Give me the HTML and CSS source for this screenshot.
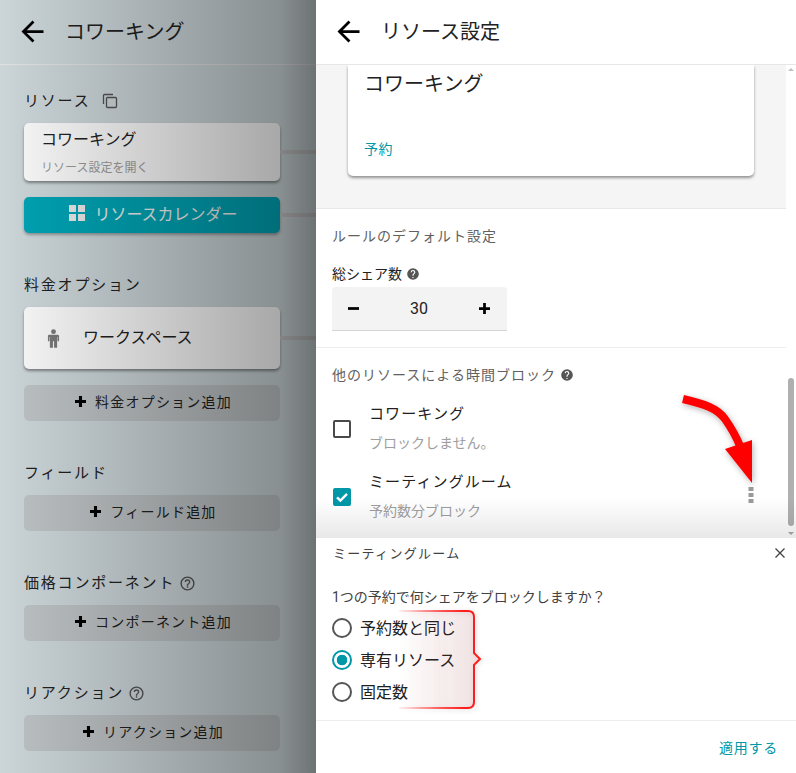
FILE: index.html
```html
<!DOCTYPE html>
<html lang="ja">
<head>
<meta charset="utf-8">
<title>リソース設定</title>
<link rel="stylesheet" href="styles.css">
</head>
<body>
<div class="app">
  <aside class="left">
    <header class="head">
      <svg class="back" viewBox="0 0 24 24"><path d="M20 11H7.830l5.590-5.590L12 4l-8 8 8 8 1.410-1.410L7.830 13H20z"/></svg>
      <h1 class="head-title">コワーキング</h1>
    </header>
    <div class="left-body">
      <section class="sec sec-first">
        <h2 class="sec-label">リソース
          <svg class="copy" viewBox="0 0 16 16"><path d="M1.500 11V2.500a1 1 0 0 1 1-1H11M4.500 5.500a1 1 0 0 1 1-1h8a1 1 0 0 1 1 1v8a1 1 0 0 1-1 1h-8a1 1 0 0 1-1-1z"/></svg>
        </h2>
        <div class="card card-res">
          <div class="card-title">コワーキング</div>
          <div class="card-sub">リソース設定を開く</div>
        </div>
        <button class="btn-teal">
          <svg class="grid" viewBox="0 0 16 16"><path d="M0 0h7v7H0zM9 0h7v7H9zM0 9h7v7H0zM9 9h7v7H9z"/></svg>
          リソースカレンダー
        </button>
      </section>
      <section class="sec">
        <h2 class="sec-label">料金オプション</h2>
        <div class="card card-opt">
          <svg class="person" viewBox="0 0 14 20"><circle cx="7" cy="2.600" r="2.600"/><path d="M2.600 6h8.800A1.600 1.600 0 0 1 13 7.600V13h-1.600V8.500h-.500V20H7.600v-7H6.400v7H3.100V8.500h-.500V13H1V7.600A1.600 1.600 0 0 1 2.600 6z"/></svg>
          <span class="opt-name">ワークスペース</span>
        </div>
        <button class="btn-add"><svg class="plus" viewBox="0 0 12 12"><path d="M4.300 0h3.400v4.300H12v3.400H7.700V12H4.300V7.700H0V4.300h4.300z"/></svg>料金オプション追加</button>
      </section>
      <section class="sec">
        <h2 class="sec-label">フィールド</h2>
        <button class="btn-add"><svg class="plus" viewBox="0 0 12 12"><path d="M4.300 0h3.400v4.300H12v3.400H7.700V12H4.300V7.700H0V4.300h4.300z"/></svg>フィールド追加</button>
      </section>
      <section class="sec">
        <h2 class="sec-label">価格コンポーネント
          <svg class="help-o" viewBox="0 0 24 24"><path d="M11 18h2v-2h-2zm1-16a10 10 0 1 0 0 20 10 10 0 0 0 0-20zm0 18a8 8 0 1 1 0-16 8 8 0 0 1 0 16zm0-14a4 4 0 0 0-4 4h2a2 2 0 1 1 4 0c0 2-3 1.750-3 5h2c0-2.250 3-2.500 3-5a4 4 0 0 0-4-4z"/></svg>
        </h2>
        <button class="btn-add"><svg class="plus" viewBox="0 0 12 12"><path d="M4.300 0h3.400v4.300H12v3.400H7.700V12H4.300V7.700H0V4.300h4.300z"/></svg>コンポーネント追加</button>
      </section>
      <section class="sec">
        <h2 class="sec-label">リアクション
          <svg class="help-o" viewBox="0 0 24 24"><path d="M11 18h2v-2h-2zm1-16a10 10 0 1 0 0 20 10 10 0 0 0 0-20zm0 18a8 8 0 1 1 0-16 8 8 0 0 1 0 16zm0-14a4 4 0 0 0-4 4h2a2 2 0 1 1 4 0c0 2-3 1.750-3 5h2c0-2.250 3-2.500 3-5a4 4 0 0 0-4-4z"/></svg>
        </h2>
        <button class="btn-add"><svg class="plus" viewBox="0 0 12 12"><path d="M4.300 0h3.400v4.300H12v3.400H7.700V12H4.300V7.700H0V4.300h4.300z"/></svg>リアクション追加</button>
      </section>
    </div>
    <i class="link link-1"></i>
    <i class="link link-2"></i>
    <i class="link link-3"></i>
    <div class="dim"></div>
  </aside>

  <main class="right">
    <header class="head">
      <svg class="back" viewBox="0 0 24 24"><path d="M20 11H7.830l5.590-5.590L12 4l-8 8 8 8 1.410-1.410L7.830 13H20z"/></svg>
      <h1 class="head-title">リソース設定</h1>
    </header>
    <div class="scroller">
      <div class="scroll-main">
        <div class="preview">
          <div class="preview-card">
            <div class="preview-title">コワーキング</div>
            <div class="preview-link">予約</div>
          </div>
        </div>
        <div class="rules">
          <div class="muted-head">ルールのデフォルト設定</div>
          <div class="field-label">総シェア数 <svg class="help" viewBox="0 0 24 24"><path d="M12 2a10 10 0 1 0 0 20 10 10 0 0 0 0-20zm1 17h-2v-2h2zm2.070-7.750-.900.920C13.450 12.900 13 13.500 13 15h-2v-.500c0-1.100.450-2.100 1.170-2.830l1.240-1.260A2 2 0 1 0 10 9H8a4 4 0 1 1 8 0c0 .880-.360 1.680-.930 2.250z"/></svg></div>
          <div class="stepper">
            <svg class="step-icon" viewBox="0 0 12 12"><path d="M0 4.500h12v3H0z"/></svg>
            <span class="step-val">30</span>
            <svg class="step-icon" viewBox="0 0 12 12"><path d="M4.500 0h3v4.500H12v3H7.500V12h-3V7.500H0v-3h4.500z"/></svg>
          </div>
        </div>
        <div class="blocks">
          <div class="muted-head">他のリソースによる時間ブロック <svg class="help" viewBox="0 0 24 24"><path d="M12 2a10 10 0 1 0 0 20 10 10 0 0 0 0-20zm1 17h-2v-2h2zm2.070-7.750-.900.920C13.450 12.900 13 13.500 13 15h-2v-.500c0-1.100.450-2.100 1.170-2.830l1.240-1.260A2 2 0 1 0 10 9H8a4 4 0 1 1 8 0c0 .880-.360 1.680-.930 2.250z"/></svg></div>
          <div class="row">
            <span class="check"></span>
            <div class="row-text">
              <div class="row-title">コワーキング</div>
              <div class="row-sub">ブロックしません。</div>
            </div>
          </div>
          <div class="row">
            <span class="check check-on"><svg viewBox="0 0 18 18"><path d="M4 9.300l3.400 3.300L14 5.800"/></svg></span>
            <div class="row-text">
              <div class="row-title">ミーティングルーム</div>
              <div class="row-sub">予約数分ブロック</div>
            </div>
            <svg class="dots" viewBox="0 0 6 16"><path d="M.500 0h5v4h-5zM.500 6h5v4h-5zM.500 12h5v4h-5z"/></svg>
          </div>
        </div>
      </div>
      <div class="scrollbar">
        <i class="sb-up"></i>
        <i class="sb-thumb"></i>
        <i class="sb-down"></i>
      </div>
      <div class="sheet-shadow"></div>
      <svg class="arrow" viewBox="0 0 100 130">
        <defs><filter id="as" x="-30%" y="-30%" width="170%" height="170%"><feDropShadow dx="1" dy="2" stdDeviation="3" flood-color="#000" flood-opacity=".3"/></filter></defs>
        <g filter="url(#as)">
          <path class="arrow-line" d="M24 15C45 20 58 24 66 35C73 45 77 52 81 62"/>
          <path class="arrow-head" d="M66 65L93 56L93 99Z"/>
        </g>
      </svg>
    </div>
    <section class="sheet">
      <div class="sheet-head">
        <span class="sheet-title">ミーティングルーム</span>
        <svg class="close" viewBox="0 0 12 12"><path d="M1.500 1.500l9 9M10.500 1.500l-9 9"/></svg>
      </div>
      <div class="question">1つの予約で何シェアをブロックしますか？</div>
      <div class="radios">
        <label class="radio-row"><span class="radio"></span><span class="radio-text">予約数と同じ</span></label>
        <label class="radio-row"><span class="radio radio-on"></span><span class="radio-text">専有リソース</span></label>
        <label class="radio-row"><span class="radio"></span><span class="radio-text">固定数</span></label>
      </div>
      <svg class="bracket" viewBox="0 0 92 110">
        <defs>
          <linearGradient id="bf" x1="0" x2="1" y1="0" y2="0"><stop offset="0" stop-color="#a03030" stop-opacity="0"/><stop offset="1" stop-color="#a03030" stop-opacity=".13"/></linearGradient>
          <linearGradient id="bs" x1="0" x2="1" y1="0" y2="0"><stop offset="0" stop-color="#ff1c1c" stop-opacity=".05"/><stop offset=".5" stop-color="#ff1c1c" stop-opacity=".7"/><stop offset=".8" stop-color="#ff1c1c"/></linearGradient>
          <filter id="bsh" x="-20%" y="-20%" width="140%" height="140%"><feDropShadow dx="1" dy="1" stdDeviation="2.500" flood-color="#000" flood-opacity=".16"/></filter>
        </defs>
        <path class="bracket-shape" d="M2 5H71Q77 5 77 11V47L83 53L77 59V96Q77 102 71 102H2" fill="url(#bf)" stroke="url(#bs)" filter="url(#bsh)"/>
      </svg>
      <div class="sheet-foot"><span class="apply">適用する</span></div>
    </section>
  </main>
</div>
</body>
</html>
```
FILE: styles.css
```css
* { box-sizing: border-box; }
html, body { margin: 0; height: 100%; overflow: hidden; }
body {
  font-family: Roboto, "Noto Sans CJK JP", "Noto Sans", sans-serif;
  color: #212121;
  background: #fff;
}
h1, h2 { margin: 0; font-weight: 400; }
button { font: inherit; border: 0; padding: 0; }

.app { display: flex; width: 796px; height: 773px; }

/* shared header */
.head { height: 65px; display: flex; align-items: center; border-bottom: 1px solid #e6e6e6; padding-left: 16px; padding-bottom: 1px; }
.back { width: 33px; height: 33px; fill: #000; flex: none; }
.head-title { font-size: 20px; line-height: 28px; margin-left: 16px; }

/* left, dimmed panel */
.left { position: relative; width: 316px; flex: none; height: 773px; background: #d0dadd; overflow: hidden; }
.left-body { padding: 0 36px 0 24px; }
.dim { position: absolute; inset: 0; background: linear-gradient(90deg, rgba(0,0,0,.02) 0%, rgba(0,0,0,.05) 7.600%, rgba(0,0,0,.34) 88.600%, rgba(0,0,0,.48) 100%); pointer-events: none; }
.sec { margin-top: 40px; }
.sec-first { margin-top: 24px; }
.sec-label { font-size: 15px; line-height: 24px; height: 24px; margin-bottom: 10px; letter-spacing: 1.800px; display: flex; align-items: center; }
.copy { width: 16px; height: 16px; margin-left: 12px; fill: none; stroke: #555; stroke-width: 1.300; }
.help-o { width: 17px; height: 17px; margin-left: 4px; fill: #555; }
.card { background: #fff; border-radius: 5px; box-shadow: 0 2px 3px rgba(0,0,0,.4); }
.card-res { height: 58px; padding: 6px 17px; }
.card-title { font-size: 16px; line-height: 22px; }
.card-sub { font-size: 12px; line-height: 16px; margin-top: 9px; color: #9e9e9e; }
.btn-teal { width: 100%; height: 36px; margin-top: 16px; padding: 0 0 4px 3px; border-radius: 5px; background: #00a7b8; color: #f3f3f3; font-size: 16px; display: flex; align-items: center; justify-content: center; gap: 9px; box-shadow: 0 2px 3px rgba(0,0,0,.3); }
.grid { width: 16px; height: 16px; fill: #eee; }
.card-opt { height: 62px; display: flex; align-items: center; padding-left: 23px; margin-bottom: 16px; }
.person { width: 13px; height: 19px; fill: #7b7b7b; flex: none; margin-top: 1px; }
.opt-name { margin-left: 23px; font-size: 16px; margin-top: -4px; }
.btn-add { width: 100%; height: 36px; padding: 0 0 4px 3px; border-radius: 5px; background: #c1c6c8; color: #212121; font-size: 14px; letter-spacing: 1.200px; display: flex; align-items: center; justify-content: center; gap: 9px; }
.plus { width: 11px; height: 11px; fill: #000; }
.link { position: absolute; left: 280px; width: 36px; height: 4px; background: #c8c8c8; }
.link-1 { top: 150px; }
.link-2 { top: 213px; }
.link-3 { top: 336px; }

/* right panel */
.right { width: 480px; flex: none; height: 773px; display: flex; flex-direction: column; background: #fff; }
.scroller { position: relative; height: 473px; flex: none; overflow: hidden; }
.scroll-main { width: 470px; }
.preview { height: 144px; background: #f5f5f5; border-bottom: 1px solid #e8e8e8; padding: 0 32px; }
.preview-card { height: 111px; background: #fff; border-radius: 0 0 5px 5px; box-shadow: 0 2px 3px rgba(0,0,0,.4); padding: 5px 16px; }
.preview-title { font-size: 20px; line-height: 28px; }
.preview-link { font-size: 14px; line-height: 20px; margin-top: 41px; color: #0097a7; letter-spacing: .4px; }
.rules { height: 139px; padding: 17px 16px 0; border-bottom: 1px solid #eee; }
.muted-head { font-size: 14px; line-height: 20px; color: #616161; letter-spacing: 1px; display: flex; align-items: center; gap: 4px; }
.field-label { font-size: 14px; line-height: 20px; margin-top: 18px; color: #212121; display: flex; align-items: center; gap: 4px; }
.help { width: 14px; height: 14px; fill: #555; }
.stepper { width: 175px; height: 44px; margin-top: 3px; background: #f3f3f3; border-radius: 4px 4px 0 0; border-bottom: 1px solid #d6d6d6; display: flex; align-items: center; justify-content: space-between; padding: 0 17px 0 16px; }
.step-icon { width: 11px; height: 11px; fill: #000; }
.step-val { font-size: 16px; }
.blocks { padding: 17px 16px 0; }
.row { display: flex; align-items: center; height: 68px; }
.blocks .row:nth-child(2) { margin-top: 10px; }
.check { width: 18px; height: 18px; margin-left: 1px; border: 2px solid #4a4a4a; border-radius: 2px; flex: none; }
.check-on { background: #0097a7; border: 0; }
.check-on svg { display: block; width: 18px; height: 18px; fill: none; stroke: #fff; stroke-width: 2.400; }
.row-text { margin: -2px 0 0 18px; flex: 1; }
.row-title { font-size: 15px; line-height: 20px; letter-spacing: 1.100px; color: #212121; }
.row-sub { font-size: 14px; line-height: 20px; margin-top: 9px; color: #9e9e9e; }
.dots { width: 6px; height: 16px; fill: #9a9a9a; margin-right: 16px; flex: none; margin-top: -4px; }

.scrollbar { position: absolute; right: 0; top: 0; bottom: 0; width: 10px; }
.sb-thumb { position: absolute; left: 2px; width: 6px; top: 313px; height: 148px; border-radius: 3px; background: #b0b0b0; }
.sb-up, .sb-down { position: absolute; left: 2px; width: 0; height: 0; border-left: 3px solid transparent; border-right: 3px solid transparent; }
.sb-up { top: 3px; border-bottom: 3px solid #c0c0c0; }
.sb-down { bottom: 3px; border-top: 3px solid #a8a8a8; }
.sheet-shadow { position: absolute; left: 0; right: 0; bottom: 0; height: 40px; background: linear-gradient(180deg, rgba(0,0,0,0), rgba(0,0,0,.09)); pointer-events: none; }
.arrow { position: absolute; left: 343px; top: 319px; width: 100px; height: 130px; overflow: visible; }
.arrow-line { fill: none; stroke: #f00; stroke-width: 8; }
.arrow-head { fill: #f00; }

/* bottom sheet */
.sheet { position: relative; flex: 1; background: #fff; }
.sheet-head { height: 31px; display: flex; align-items: center; justify-content: space-between; padding: 0 10px 2px 17px; }
.sheet-title { font-size: 13px; letter-spacing: 1.300px; color: #424242; }
.close { width: 12px; height: 12px; fill: none; stroke: #424242; stroke-width: 1.300; }
.question { font-size: 14px; line-height: 20px; margin: 18px 0 0 16px; color: #424242; }
.radios { margin: 5px 0 0 16px; display: flex; flex-direction: column; }
.radio-row { height: 32px; display: flex; align-items: center; font-size: 16px; color: #212121; gap: 8px; }
.radio-text { margin-top: -3px; }
.radio { width: 20px; height: 20px; border: 2px solid #555; border-radius: 50%; flex: none; }
.radio-on { border-color: #0097a7; background: radial-gradient(circle, #0097a7 0 5px, #fff 5.600px); }
.bracket { position: absolute; left: 81px; top: 68px; width: 92px; height: 110px; overflow: visible; }
.bracket-shape { stroke-width: 2; }
.sheet-foot { position: absolute; left: 0; right: 0; bottom: 0; height: 53px; border-top: 1px solid #eee; display: flex; align-items: center; justify-content: flex-end; padding: 0 18px 1px 0; }
.apply { font-size: 14px; letter-spacing: .75px; color: #0097a7; }
```
